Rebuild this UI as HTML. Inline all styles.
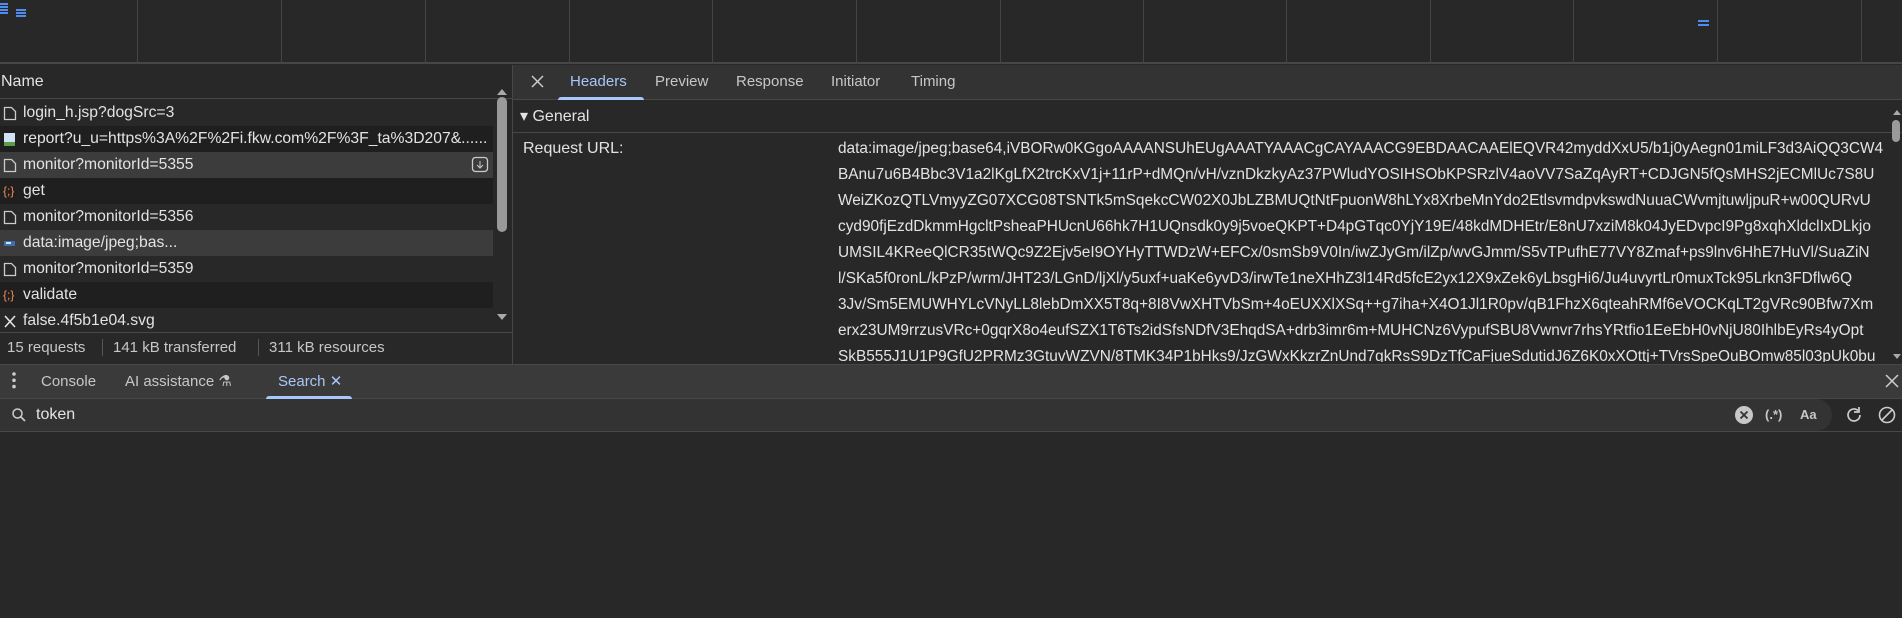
<!DOCTYPE html>
<html><head><meta charset="utf-8"><style>
*{margin:0;padding:0;box-sizing:border-box}
body{width:1902px;height:618px;background:#282828;color:#e3e3e3;font-family:"Liberation Sans",sans-serif;font-size:15px;position:relative;overflow:hidden}
.a{position:absolute}
.vl{position:absolute;top:0;height:64px;width:1px;background:#444}
.row{position:absolute;left:0;width:493px;height:26px;line-height:26px;white-space:nowrap;overflow:hidden;font-size:15.7px}
.row span.t{position:absolute;left:23px}
.ic{position:absolute;left:3px;top:6px}
.ln{white-space:nowrap;overflow:hidden;width:1054px;line-height:26px;height:26px}
.tab{position:absolute;top:63px;line-height:38px;color:#c7c7c7}
</style></head><body>
<div class="a" style="left:0;top:0;width:1902px;height:64px;background:#282828;border-bottom:2px solid #474747"></div>
<div class="vl" style="left:137px"></div><div class="vl" style="left:281px"></div><div class="vl" style="left:425px"></div><div class="vl" style="left:569px"></div><div class="vl" style="left:712px"></div><div class="vl" style="left:856px"></div><div class="vl" style="left:1000px"></div><div class="vl" style="left:1143px"></div><div class="vl" style="left:1286px"></div><div class="vl" style="left:1430px"></div><div class="vl" style="left:1573px"></div><div class="vl" style="left:1717px"></div><div class="vl" style="left:1861px"></div>
<div class="a" style="left:0;top:3px;width:8px;height:2px;background:#4f8cf0;box-shadow:0 3px 0 #4f8cf0,0 6px 0 #4f8cf0,0 9px 0 #4f8cf0"></div>
<div class="a" style="left:16px;top:9px;width:10px;height:2px;background:#4f8cf0;box-shadow:0 3px 0 #4f8cf0,0 6px 0 #4f8cf0"></div>
<div class="a" style="left:1698px;top:20px;width:11px;height:2px;background:#4f8cf0;box-shadow:0 4px 0 #4f8cf0"></div>

<div class="a" style="left:0;top:65px;width:512px;height:34px;border-bottom:1px solid #474747"></div>
<div class="a" style="left:1px;top:65px;line-height:34px;font-size:16px">Name</div>
<div class="row" style="top:100px"><svg class="ic" width="14" height="15"><path d="M1.5 1.5h7l4 4v8h-11z" fill="none" stroke="#ccc" stroke-width="1.3"/></svg><span class="t">login_h.jsp?dogSrc=3</span></div>
<div class="row" style="top:126px;background:#1f1f1f"><svg class="ic" width="14" height="15"><rect x="1" y="1" width="11" height="13" fill="#cfe3f5"/><rect x="1" y="10" width="11" height="4" fill="#5a9e4a"/></svg><span class="t">report?u_u=https%3A%2F%2Fi.fkw.com%2F%3F_ta%3D207&amp;......</span></div>
<div class="row" style="top:152px;background:#3c3c3c"><svg class="ic" width="14" height="15"><path d="M1.5 1.5h7l4 4v8h-11z" fill="none" stroke="#ccc" stroke-width="1.3"/></svg><span class="t">monitor?monitorId=5355</span><svg class="a" style="left:471px;top:4px" width="18" height="18"><rect x="1.5" y="1.5" width="15" height="14" rx="3" fill="none" stroke="#ccc" stroke-width="1.3"/><path d="M9 5v6M6 9l3 3 3-3" stroke="#ccc" fill="none"/></svg></div>
<div class="row" style="top:178px;background:#1f1f1f"><span class="ic" style="color:#f28b54;font-size:12px;top:0">{;}</span><span class="t">get</span></div>
<div class="row" style="top:204px"><svg class="ic" width="14" height="15"><path d="M1.5 1.5h7l4 4v8h-11z" fill="none" stroke="#ccc" stroke-width="1.3"/></svg><span class="t">monitor?monitorId=5356</span></div>
<div class="row" style="top:230px;background:#3c3c3c"><svg class="ic" width="14" height="15"><rect x="1" y="5" width="11" height="5" fill="#3f6db3"/><rect x="3" y="6" width="5" height="2" fill="#cfe3f5"/></svg><span class="t">data:image/jpeg;bas...</span></div>
<div class="row" style="top:256px"><svg class="ic" width="14" height="15"><path d="M1.5 1.5h7l4 4v8h-11z" fill="none" stroke="#ccc" stroke-width="1.3"/></svg><span class="t">monitor?monitorId=5359</span></div>
<div class="row" style="top:282px;background:#1f1f1f"><span class="ic" style="color:#f28b54;font-size:12px;top:0">{;}</span><span class="t">validate</span></div>
<div class="row" style="top:308px;height:24px"><svg class="ic" width="14" height="15"><path d="M2 2l10 11M12 2L2 13" stroke="#e3e3e3" stroke-width="1.6"/></svg><span class="t">false.4f5b1e04.svg</span></div>
<div class="a" style="left:493px;top:100px;width:19px;height:232px;background:#282828"></div>
<div class="a" style="left:497px;top:89px;width:0;height:0;border-left:5px solid transparent;border-right:5px solid transparent;border-bottom:6px solid #aaa"></div>
<div class="a" style="left:497px;top:89px;width:10px;height:135px;border-radius:5px;background:#9a9a9a;margin-top:8px"></div>
<div class="a" style="left:497px;top:314px;width:0;height:0;border-left:5px solid transparent;border-right:5px solid transparent;border-top:6px solid #aaa"></div>
<div class="a" style="left:0;top:332px;width:512px;height:1px;background:#474747"></div>
<div class="a" style="left:7px;top:333px;line-height:29px;color:#c7c7c7">15 requests</div>
<div class="a" style="left:102px;top:339px;width:1px;height:17px;background:#555"></div>
<div class="a" style="left:113px;top:333px;line-height:29px;color:#c7c7c7">141 kB transferred</div>
<div class="a" style="left:258px;top:339px;width:1px;height:17px;background:#555"></div>
<div class="a" style="left:269px;top:333px;line-height:29px;color:#c7c7c7">311 kB resources</div>
<div class="a" style="left:512px;top:65px;width:1px;height:300px;background:#474747"></div>

<div class="a" style="left:513px;top:65px;width:1389px;height:35px;background:#333;border-bottom:1px solid #474747"></div>
<svg class="a" style="left:531px;top:75px" width="13" height="13"><path d="M1 1l11 11M12 1L1 12" stroke="#ccc" stroke-width="1.5"/></svg>
<div class="tab" style="left:570px;color:#a8c7fa">Headers</div>
<div class="a" style="left:558px;top:97px;width:86px;height:3px;background:#a8c7fa;border-radius:3px 3px 0 0"></div>
<div class="tab" style="left:655px">Preview</div>
<div class="tab" style="left:736px">Response</div>
<div class="tab" style="left:831px">Initiator</div>
<div class="tab" style="left:911px">Timing</div>
<div class="a" style="left:513px;top:101px;width:1389px;height:32px;border-bottom:1px solid #474747"></div>
<div class="a" style="left:520px;top:101px;line-height:32px;font-size:16px">▾ General</div>
<div class="a" style="left:523px;top:136px;line-height:26px;font-size:16px">Request URL:</div>
<div class="a" style="left:838px;top:136px;height:226px;overflow:hidden;font-size:15.4px;color:#e3e3e3">
<div class="ln">data:image/jpeg;base64,iVBORw0KGgoAAAANSUhEUgAAATYAAACgCAYAAACG9EBDAACAAElEQVR42myddXxU5/b1j0yAegn01miLF3d3AiQQ3CW4</div>
<div class="ln">BAnu7u6B4Bbc3V1a2lKgLfX2trcKxV1j+11rP+dMQn/vH/vznDkzkyAz37PWludYOSIHSObKPSRzlV4aoVV7SaZqAyRT+CDJGN5fQsMHS2jECMlUc7S8U</div>
<div class="ln">WeiZKozQTLVmyyZG07XCG08TSNTk5mSqekcCW02X0JbLZBMUQtNtFpuonW8hLYx8XrbeMnYdo2EtlsvmdpvkswdNuuaCWvmjtuwljpuR+w00QURvU</div>
<div class="ln">cyd90fjEzdDkmmHgcltPsheaPHUcnU66hk7H1UQnsdk0y9j5voeQKPT+D4pGTqc0YjY19E/48kdMDHEtr/E8nU7xziM8k04JyEDvpcI9Pg8xqhXldclIxDLkjo</div>
<div class="ln">UMSIL4KReeQlCR35tWQc9Z2Ejv5eI9OYHyTTWDzW+EFCx/0smSb9V0In/iwZJyGm/ilZp/wvGJmm/S5vTPufhE77VY8Zmaf+ps9lnv6HhE7HuVl/SuaZiN</div>
<div class="ln">l/SKa5f0ronL/kPzP/wrm/JHT23/LGnD/ljXl/y5uxf+uaKe6yvD3/irwTe1neXHhZ3l14Rd5fcE2yx12X9xZek6yLbsgHi6/Ju4uvyrtLr0muxTck95Lrkn3FDflw6Q</div>
<div class="ln">3Jv/Sm5EMUWHYLcVNyLL8lebDmXX5T8q+8I8VwXHTVbSm+4oEUXXlXSq++g7iha+X4O1Jl1R0pv/qB1FhzX6qteahRMf6eVOCKqLT2gVRc90Bfw7Xm</div>
<div class="ln">erx23UM9rrzusVRc+0gqrX8o4eufSZX1T6Ts2idSfsNDfV3EhqdSA+drb3imr6m+MUHCNz6VypufSBU8Vwnvr7rhsYRtfio1EeEbH0vNjU80IhlbEyRs4yOpt</div>
<div class="ln">SkB555J1U1P9GfU2PRMz3GtuvWZVN/8TMK34P1bHks9/JzGWxKkzrZnUnd7gkRsS9DzTfCaFjueSdutidJ6Z6K0xXOttj+TVrsSpeOuBOmw85l03pUk0bu</div>
</div>
<div class="a" style="left:1893px;top:110px;width:0;height:0;border-left:4px solid transparent;border-right:4px solid transparent;border-bottom:5px solid #aaa"></div>
<div class="a" style="left:1892px;top:120px;width:8px;height:22px;border-radius:4px;background:#9a9a9a"></div>
<div class="a" style="left:1893px;top:354px;width:0;height:0;border-left:4px solid transparent;border-right:4px solid transparent;border-top:5px solid #aaa"></div>

<div class="a" style="left:0;top:364px;width:1902px;height:35px;background:#3a3a3a;border-top:1px solid #474747;border-bottom:1px solid #474747"></div>
<div class="a" style="left:12px;top:372px;width:4px;height:4px;border-radius:2px;background:#ccc;box-shadow:0 7px 0 #ccc,0 14px 0 #ccc;transform:scale(.9)"></div>
<div class="a" style="left:41px;top:364px;line-height:35px;color:#c7c7c7">Console</div>
<div class="a" style="left:125px;top:364px;line-height:35px;color:#c7c7c7">AI assistance ⚗</div>
<div class="a" style="left:278px;top:364px;line-height:35px;color:#a8c7fa">Search ✕</div>
<div class="a" style="left:266px;top:396px;width:86px;height:3px;background:#a8c7fa;border-radius:3px 3px 0 0"></div>
<svg class="a" style="left:1885px;top:374px" width="14" height="14"><path d="M1 1l12 12M13 1L1 13" stroke="#ccc" stroke-width="1.5"/></svg>
<div class="a" style="left:0;top:399px;width:1832px;height:32px;background:#333;border-radius:0 16px 16px 0"></div>
<div class="a" style="left:0;top:431px;width:1902px;height:1px;background:#474747"></div>
<svg class="a" style="left:11px;top:407px" width="16" height="16"><circle cx="6.5" cy="6.5" r="4.5" fill="none" stroke="#ccc" stroke-width="1.5"/><path d="M10 10l4 4" stroke="#ccc" stroke-width="1.6"/></svg>
<div class="a" style="left:36px;top:399px;line-height:32px;font-size:16px">token</div>
<svg class="a" style="left:1735px;top:406px" width="18" height="18"><circle cx="9" cy="9" r="9" fill="#c7c7c7"/><path d="M5.5 5.5l7 7M12.5 5.5l-7 7" stroke="#333" stroke-width="1.8"/></svg>
<div class="a" style="left:1765px;top:399px;line-height:32px;font-size:13px;font-weight:bold;color:#c7c7c7">(.*)</div>
<div class="a" style="left:1800px;top:399px;line-height:32px;font-size:13px;font-weight:bold;color:#c7c7c7">Aa</div>
<svg class="a" style="left:1845px;top:406px" width="18" height="18"><path d="M15 9a6 6 0 1 1-2-4.5" fill="none" stroke="#ccc" stroke-width="1.7"/><path d="M14 1v5h-5" fill="none" stroke="#ccc" stroke-width="1.7"/></svg>
<svg class="a" style="left:1878px;top:406px" width="18" height="18"><circle cx="9" cy="9" r="7.5" fill="none" stroke="#ccc" stroke-width="1.6"/><path d="M4 14L14 4" stroke="#ccc" stroke-width="1.6"/></svg>
</body></html>
